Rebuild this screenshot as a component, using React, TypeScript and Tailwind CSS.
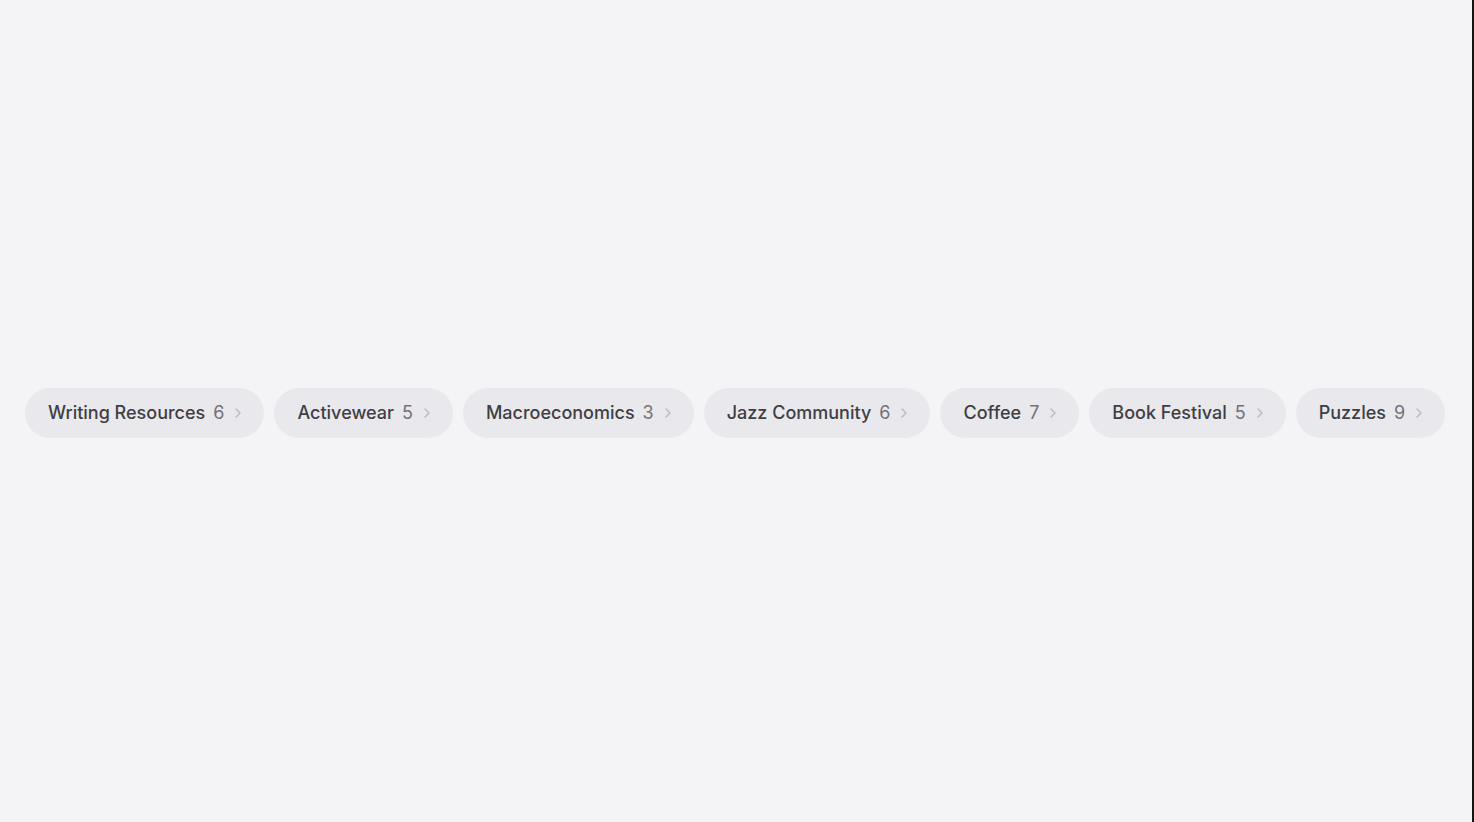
import { ChevronRight } from "lucide-react";

const chips = [
  { label: "Writing Resources", count: 6 },
  { label: "Activewear", count: 5 },
  { label: "Macroeconomics", count: 3 },
  { label: "Jazz Community", count: 6 },
  { label: "Coffee", count: 7 },
  { label: "Book Festival", count: 5 },
  { label: "Puzzles", count: 9 },
];

export default function App() {
  return (
    <div
      className="min-h-screen w-full bg-[#f4f4f6] border-r-2 border-[#151515] flex items-center pl-[25px] pt-[3px]"
      style={{ fontFamily: "Inter, 'Noto Sans', sans-serif" }}
    >
      <div className="flex items-center gap-[10px]">
        {chips.map((c) => (
          <button
            key={c.label}
            className="shrink-0 whitespace-nowrap flex items-center h-[50px] pl-[23px] pr-[18px] rounded-full bg-[#e9e8ec] text-[18px] leading-none"
          >
            <span className="font-medium text-[#3f3e44]">{c.label}</span>
            <span className="ml-[8px] text-[#737279]">{c.count}</span>
            <ChevronRight className="ml-[6px] w-[16px] h-[16px] text-[#b9b8bd]" strokeWidth={2} />
          </button>
        ))}
      </div>
    </div>
  );
}
